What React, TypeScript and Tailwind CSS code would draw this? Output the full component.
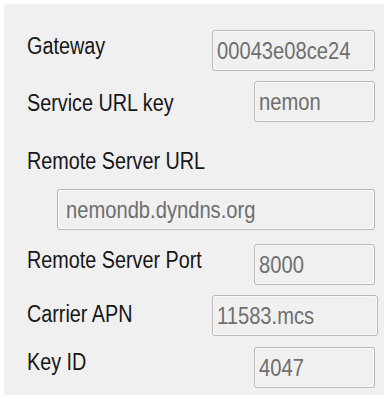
const font = { fontFamily: '"Liberation Sans", Arial, sans-serif' }

// the reference uses a narrow face; squeeze Liberation Sans to match
const labelSqueeze = 'inline-block origin-left scale-x-[0.86]'
const valueSqueeze = 'inline-block origin-left scale-x-[0.84]'
const labelClass = 'text-[23px] leading-[23px] text-[#161616] whitespace-nowrap'
const boxClass =
  'h-[41px] rounded-[3px] border border-[#b9b9b9] bg-[#f0f0f0] text-[24px] leading-[39px] text-[#6e6e6e] whitespace-nowrap shadow-[inset_0_0_0_1px_#fafafa] overflow-hidden'

function Field({ value, width, pl = 'pl-[4px]' }: { value: string; width: string; pl?: string }) {
  return (
    <div className={`${boxClass} ${width} ${pl}`}>
      <span className={valueSqueeze}>{value}</span>
    </div>
  )
}

function Label({ text, className = '' }: { text: string; className?: string }) {
  return (
    <div className={`${labelClass} ${className}`}>
      <span className={labelSqueeze}>{text}</span>
    </div>
  )
}

export default function App() {
  return (
    <div className="h-[399px] w-[390px] bg-white pl-[4px] pt-[4px]" style={font}>
      <div className="flex h-[391px] w-[380px] flex-col bg-[#f0f0f0] pl-[23px] pr-[9px] pt-[26px]">
        <div className="flex items-start justify-between">
          <Label text="Gateway" className="mt-[5px]" />
          <Field value="00043e08ce24" width="w-[163px]" />
        </div>
        <div className="mt-[10px] flex items-start justify-between">
          <Label text="Service URL key" className="mt-[11px]" />
          <Field value="nemon" width="w-[121px]" />
        </div>
        <Label text="Remote Server URL" className="mt-[28px]" />
        <div className="mt-[16px] flex">
          <Field value="nemondb.dyndns.org" width="ml-[30px] w-[319px]" pl="pl-[8px]" />
        </div>
        <div className="mt-[14px] flex items-start justify-between">
          <Label text="Remote Server Port" className="mt-[5px]" />
          <Field value="8000" width="w-[121px]" />
        </div>
        <div className="mt-[10px] flex items-start justify-between">
          <Label text="Carrier APN" className="mt-[8px]" />
          <Field value="11583.mcs" width="w-[166px] -mr-[3px]" />
        </div>
        <div className="mt-[11px] flex items-start justify-between">
          <Label text="Key ID" className="mt-[4px]" />
          <Field value="4047" width="w-[121px]" />
        </div>
      </div>
    </div>
  )
}
